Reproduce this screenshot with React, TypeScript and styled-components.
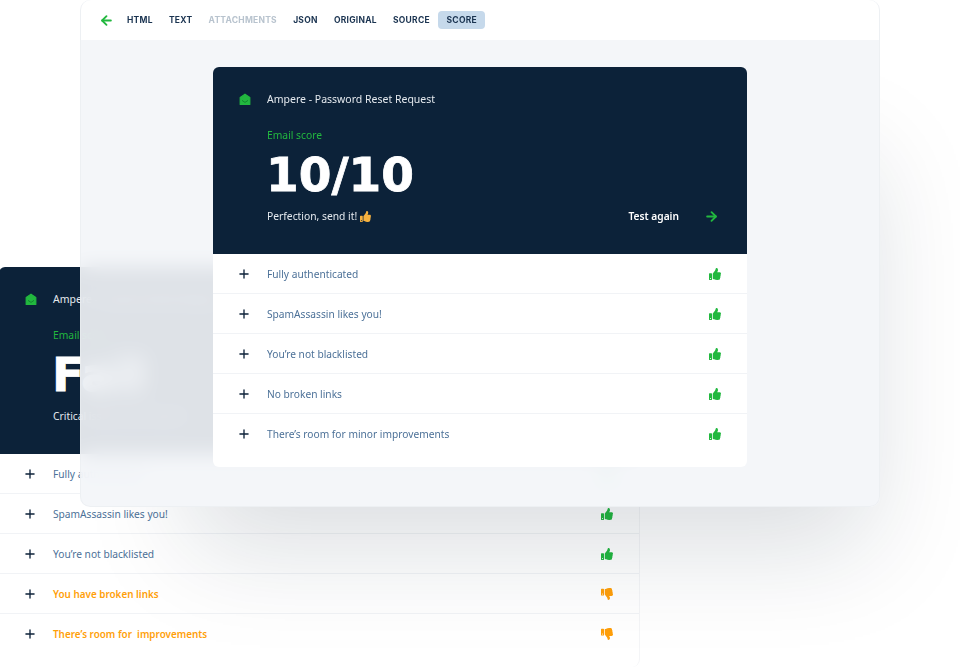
import React from "react";
import styled, { createGlobalStyle } from "styled-components";
import { ArrowLeft, ArrowRight, Plus } from "lucide-react";
import { FaThumbsDown, FaThumbsUp } from "react-icons/fa";

const GlobalStyle = createGlobalStyle`
  html, body {
    margin: 0;
    padding: 0;
    background: #fff;
  }
  body {
    font-family: "Noto Sans", "Open Sans", sans-serif;
    -webkit-font-smoothing: antialiased;
  }
`;

const Stage = styled.div`
  position: relative;
  width: 960px;
  height: 667px;
  overflow: hidden;
  background: #fff;
`;

const BackWindow = styled.div`
  position: absolute;
  left: -1px;
  top: 267px;
  width: 641px;
`;

const FrontWindow = styled.div`
  position: absolute;
  left: 80px;
  top: 0;
  width: 800px;
  height: 507px;
  box-sizing: border-box;
  display: flex;
  flex-direction: column;
  border: 1px solid rgba(234, 237, 241, 0.7);
  border-top: 0;
  border-radius: 10px;
  background: rgba(243, 245, 248, 0.91);
  backdrop-filter: blur(10px);
  box-shadow: 50px 100px 100px -60px rgba(11, 34, 57, 0.15);
`;

const TopBar = styled.nav`
  height: 40px;
  flex: none;
  display: flex;
  align-items: center;
  padding-left: 18px;
  background: #fff;
  border-radius: 10px 10px 0 0;
`;

const BackLink = styled.span`
  display: flex;
  width: 20px;
  color: #22b83f;
`;

const Tab = styled.span<{ $active?: boolean; $disabled?: boolean }>`
  height: 18px;
  display: flex;
  align-items: center;
  padding: 0 ${(p) => (p.$active ? 8.5 : 8)}px;
  margin-right: 0.2px;
  border-radius: 4px;
  font-family: Inter, sans-serif;
  font-size: 8.5px;
  font-weight: 700;
  letter-spacing: 0.25px;
  color: ${(p) => (p.$disabled ? "#b8c3ce" : "#1a3350")};
  background: ${(p) => (p.$active ? "#c6d9eb" : "transparent")};
`;

const Body = styled.div`
  flex: 1;
  padding: 27px 0 0 132px;
`;

const Card = styled.section<{ $width: number; $square?: boolean }>`
  width: ${(p) => p.$width}px;
  box-sizing: border-box;
  padding-bottom: 13px;
  background: #fff;
  border-radius: ${(p) => (p.$square ? "8px 0 8px 8px" : "6px")};
  border-right: ${(p) => (p.$square ? "1px solid #f4f5f7" : "0")};
`;

const Hero = styled.header`
  height: 187px;
  box-sizing: border-box;
  padding: 25px 30px 0 26px;
  background: #0c2239;
  border-radius: 6px 6px 0 0;
`;

const Subject = styled.div`
  display: flex;
  align-items: center;
  height: 14px;
  gap: 16px;
  font-size: 10.5px;
  color: #e4e9ee;
`;

const ScoreLabel = styled.div`
  margin: 22px 0 0 28px;
  font-size: 10.3px;
  line-height: 14px;
  color: #22b83f;
`;

const Score = styled.div`
  margin: 7px 0 0 27px;
  font-family: "DejaVu Sans", sans-serif;
  font-size: 47px;
  line-height: 51px;
  font-weight: 700;
  color: #fff;
  -webkit-text-stroke: 0.8px #fff;
`;

const HeroFooter = styled.div`
  display: flex;
  align-items: center;
  justify-content: space-between;
  margin: 9px 0 0 28px;
  height: 14px;
`;

const Verdict = styled.div`
  display: flex;
  align-items: center;
  gap: 3px;
  font-size: 10.3px;
  color: #e4e9ee;
`;

const Retry = styled.div`
  display: flex;
  align-items: center;
  gap: 25px;
  margin-right: -2px;
  font-size: 10.2px;
  font-weight: 600;
  color: #fff;
`;

const RetryArrow = styled.span`
  display: flex;
  color: #22b83f;
`;

const Row = styled.div<{ $last?: boolean }>`
  height: 40px;
  box-sizing: border-box;
  display: flex;
  align-items: center;
  padding: 0 26px;
  border-bottom: ${(p) => (p.$last ? "0" : "1px solid #f1f3f6")};
`;

const RowIcon = styled.span`
  display: flex;
  width: 28px;
  margin-left: -2px;
  margin-right: 2px;
  color: #0c2239;
`;

const RowLabel = styled.span<{ $warn?: boolean }>`
  flex: 1;
  white-space: pre;
  font-size: ${(p) => (p.$warn ? 9.9 : 10.2)}px;
  font-weight: ${(p) => (p.$warn ? 600 : 400)};
  color: ${(p) => (p.$warn ? "#ff9f0a" : "#4c7198")};
`;

const RowVerdict = styled.span<{ $warn?: boolean }>`
  display: flex;
  color: ${(p) => (p.$warn ? "#ff9f0a" : "#22b83f")};
`;

const HandEmoji = styled(FaThumbsUp)`
  color: #f7b23f;
`;

const Logo = () => (
  <svg width="12" height="13" viewBox="0 0 12 13" aria-hidden="true">
    <path
      d="M6 1.2 L10.8 4.6 V11.4 H1.2 V4.6 Z"
      fill="#22b83f"
      stroke="#22b83f"
      strokeWidth="1.2"
      strokeLinejoin="round"
    />
    <path d="M3 7.4 L6 9.4 L9 7.4" fill="none" stroke="#0f7f2c" strokeWidth="0.9" />
  </svg>
);

type Check = { label: string; warn?: boolean };

const frontChecks: Check[] = [
  { label: "Fully authenticated" },
  { label: "SpamAssassin likes you!" },
  { label: "You’re not blacklisted" },
  { label: "No broken links" },
  { label: "There’s room for minor improvements" },
];

const backChecks: Check[] = [
  { label: "Fully authenticated" },
  { label: "SpamAssassin likes you!" },
  { label: "You’re not blacklisted" },
  { label: "You have broken links", warn: true },
  { label: "There’s room for  improvements", warn: true },
];

const tabs = ["HTML", "TEXT", "ATTACHMENTS", "JSON", "ORIGINAL", "SOURCE", "SCORE"];

const CheckRows = ({ items }: { items: Check[] }) => (
  <>
    {items.map((item, i) => (
      <Row key={item.label} $last={i === items.length - 1}>
        <RowIcon>
          <Plus size={14} strokeWidth={2.3} />
        </RowIcon>
        <RowLabel $warn={item.warn}>{item.label}</RowLabel>
        <RowVerdict $warn={item.warn}>
          {item.warn ? <FaThumbsDown size={12} /> : <FaThumbsUp size={12} />}
        </RowVerdict>
      </Row>
    ))}
  </>
);

export default function App() {
  return (
    <Stage>
      <GlobalStyle />
      <BackWindow>
        <Card $width={641} $square>
          <Hero>
            <Subject>
              <Logo />
              Ampere - Password Reset Request
            </Subject>
            <ScoreLabel>Email score</ScoreLabel>
            <Score>Fail</Score>
            <HeroFooter>
              <Verdict>Critical issues, don’t send it!</Verdict>
            </HeroFooter>
          </Hero>
          <CheckRows items={backChecks} />
        </Card>
      </BackWindow>
      <FrontWindow>
        <TopBar>
          <BackLink>
            <ArrowLeft size={15} strokeWidth={3} />
          </BackLink>
          {tabs.map((tab) => (
            <Tab key={tab} $active={tab === "SCORE"} $disabled={tab === "ATTACHMENTS"}>
              {tab}
            </Tab>
          ))}
        </TopBar>
        <Body>
          <Card $width={534}>
            <Hero>
              <Subject>
                <Logo />
                Ampere - Password Reset Request
              </Subject>
              <ScoreLabel>Email score</ScoreLabel>
              <Score>10/10</Score>
              <HeroFooter>
                <Verdict>
                  Perfection, send it! <HandEmoji size={11} />
                </Verdict>
                <Retry>
                  Test again
                  <RetryArrow>
                    <ArrowRight size={15} strokeWidth={3} />
                  </RetryArrow>
                </Retry>
              </HeroFooter>
            </Hero>
            <CheckRows items={frontChecks} />
          </Card>
        </Body>
      </FrontWindow>
    </Stage>
  );
}
